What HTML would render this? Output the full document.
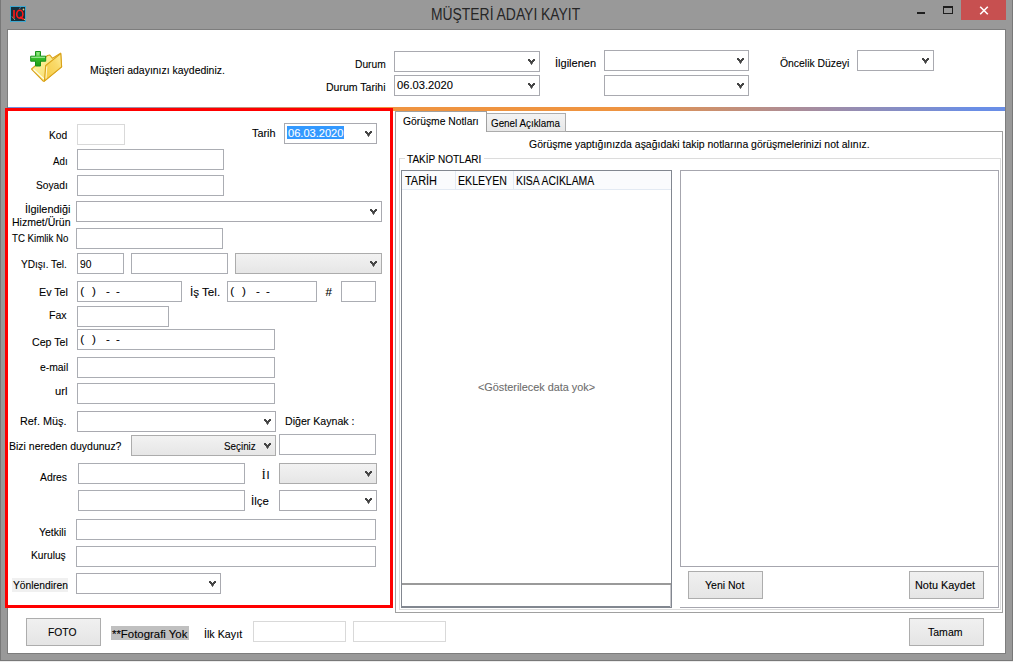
<!DOCTYPE html>
<html><head><meta charset="utf-8"><style>
html,body{margin:0;padding:0;width:1013px;height:662px;overflow:hidden;background:#fff;}
body{position:relative;font-family:"Liberation Sans",sans-serif;}
.b{position:absolute;box-sizing:border-box;}
.t{position:absolute;white-space:pre;transform-origin:0 0;-webkit-text-stroke:0.1px currentColor;font-family:"Liberation Sans",sans-serif;}
</style></head><body>
<div class="b" style="left:0px;top:0px;width:1013px;height:662px;background:#999;"></div>
<div class="b" style="left:0px;top:661px;width:1013px;height:1px;background:#ececec;"></div>
<div class="b" style="left:0px;top:660px;width:1013px;height:1px;background:#787878;"></div>
<div class="b" style="left:0px;top:0px;width:1px;height:661px;background:#787878;"></div>
<div class="b" style="left:1012px;top:0px;width:1px;height:661px;background:#787878;"></div>
<div class="b" style="left:7px;top:29px;width:999px;height:625px;background:#7d7d7d;"></div>
<div class="b" style="left:8px;top:30px;width:997px;height:623px;background:#fff;"></div>
<svg width="16" height="16" viewBox="0 0 16 16" style="position:absolute;left:10px;top:6px">
<rect x="0.5" y="0.5" width="15" height="15" fill="#15303c" stroke="#3fa8d0" stroke-width="1"/>
<path d="M2 10.5 L5 14" stroke="#8fd0a0" stroke-width="0.8"/>
<path d="M9 2.5 L11 1.5" stroke="#4aa0d0" stroke-width="0.7"/>
<circle cx="13.5" cy="3.5" r="0.9" fill="#e8c070"/>
<circle cx="14.5" cy="13.5" r="0.8" fill="#e0b060"/>
<rect x="3.2" y="4" width="1.6" height="8.5" fill="#ff1818"/>
<ellipse cx="9.8" cy="8.2" rx="3.1" ry="3.9" fill="none" stroke="#ff1818" stroke-width="1.6"/>
<path d="M10 11 L13.6 13.2" stroke="#ff1818" stroke-width="1.7"/>
</svg>
<div class="t" style="left:430.63px;top:7px;font-size:16px;line-height:16px;color:#262626;transform:scaleX(0.8681);font-weight:normal;-webkit-text-stroke:0;">MÜŞTERİ ADAYI KAYIT</div>
<div class="b" style="left:917px;top:12px;width:8px;height:2px;background:#1e1e1e;"></div>
<div class="b" style="left:943px;top:6px;width:10px;height:8px;border:1px solid #1e1e1e;border-top-width:2px;"></div>
<div class="b" style="left:961px;top:0px;width:45px;height:20px;background:#c75050;"></div>
<svg width="10" height="9" viewBox="0 0 10 9" style="position:absolute;left:979px;top:6px"><path d="M1.2 0.8 L8.8 8.2 M8.8 0.8 L1.2 8.2" stroke="#fff" stroke-width="1.6"/></svg>
<svg width="38" height="38" viewBox="0 0 38 38" style="position:absolute;left:27px;top:47px">
<defs>
<linearGradient id="fb" x1="0" y1="0" x2="1" y2="1"><stop offset="0" stop-color="#fffbb0"/><stop offset="1" stop-color="#f7d35a"/></linearGradient>
<linearGradient id="ff" x1="1" y1="0" x2="0" y2="1"><stop offset="0" stop-color="#fdf0a0"/><stop offset="0.35" stop-color="#f9da6a"/><stop offset="1" stop-color="#f5c940"/></linearGradient>
<linearGradient id="gp" x1="0" y1="0" x2="0" y2="1"><stop offset="0" stop-color="#7fe070"/><stop offset="0.45" stop-color="#36c02a"/><stop offset="1" stop-color="#1e9a14"/></linearGradient>
</defs>
<path d="M4.5 22 L20.5 8.5 L22.8 8 L25.5 11.3 L33.6 6.2 L34.6 19.8 L17.2 34.2 L16.2 34.2 Z" fill="url(#fb)" stroke="#d9a21a" stroke-width="1.1" stroke-linejoin="round"/>
<path d="M6.5 22.5 L17 32" stroke="#fffde8" stroke-width="1.2"/>
<path d="M18.7 18.5 L33.8 6.6 L34.6 19.8 L17.4 34.2 Z" fill="url(#ff)" stroke="#d9a21a" stroke-width="1.1" stroke-linejoin="round"/>
<path d="M19.8 19.5 L19 31.5" stroke="#fffbe0" stroke-width="0.9"/>
<path d="M8.5 4.5 h5 v4.7 h5.2 v5 h-5.2 v4.8 h-5 v-4.8 h-4.8 v-5 h4.8 Z" fill="url(#gp)" stroke="#18901a" stroke-width="1" stroke-linejoin="round"/>
<path d="M4.2 10.3 h13.8 M11 5.5 v3" stroke="#c8f5c0" stroke-width="1" opacity="0.8"/>
</svg>
<div class="t" style="left:89.90px;top:64px;font-size:11.6px;line-height:11.6px;color:#000;transform:scaleX(0.9023);font-weight:normal;">Müşteri adayınızı kaydediniz.</div>
<div class="t" style="left:355.00px;top:58px;font-size:11.6px;line-height:11.6px;color:#000;transform:scaleX(0.8849);font-weight:normal;">Durum</div>
<div class="t" style="left:326.00px;top:81px;font-size:11.6px;line-height:11.6px;color:#000;transform:scaleX(0.9089);font-weight:normal;">Durum Tarihi</div>
<div class="b" style="left:394px;top:51px;width:146px;height:21px;border:1px solid #a9aab0;background:#fff;"><svg width="7" height="6" viewBox="0 0 7 6" style="position:absolute;right:4px;top:7px" shape-rendering="crispEdges"><g fill="#454545"><rect x="0" y="0" width="2" height="1" opacity="1"/><rect x="5" y="0" width="2" height="1" opacity="1"/><rect x="0" y="1" width="3" height="1" opacity="1"/><rect x="4" y="1" width="3" height="1" opacity="1"/><rect x="1" y="2" width="5" height="1" opacity="1"/><rect x="2" y="3" width="3" height="1" opacity="1"/><rect x="3" y="4" width="1" height="1" opacity="1"/><rect x="2" y="4" width="1" height="1" opacity="0.6"/><rect x="4" y="4" width="1" height="1" opacity="0.6"/><rect x="3" y="5" width="1" height="1" opacity="0.8"/></g></svg></div>
<div class="b" style="left:394px;top:75px;width:146px;height:21px;border:1px solid #a9aab0;background:#fff;"><svg width="7" height="6" viewBox="0 0 7 6" style="position:absolute;right:4px;top:7px" shape-rendering="crispEdges"><g fill="#454545"><rect x="0" y="0" width="2" height="1" opacity="1"/><rect x="5" y="0" width="2" height="1" opacity="1"/><rect x="0" y="1" width="3" height="1" opacity="1"/><rect x="4" y="1" width="3" height="1" opacity="1"/><rect x="1" y="2" width="5" height="1" opacity="1"/><rect x="2" y="3" width="3" height="1" opacity="1"/><rect x="3" y="4" width="1" height="1" opacity="1"/><rect x="2" y="4" width="1" height="1" opacity="0.6"/><rect x="4" y="4" width="1" height="1" opacity="0.6"/><rect x="3" y="5" width="1" height="1" opacity="0.8"/></g></svg></div>
<div class="t" style="left:396.50px;top:80px;font-size:11.5px;line-height:11.5px;color:#000;transform:scaleX(0.9710);font-weight:normal;">06.03.2020</div>
<div class="t" style="left:554.75px;top:57px;font-size:11.6px;line-height:11.6px;color:#000;transform:scaleX(0.9511);font-weight:normal;">İlgilenen</div>
<div class="b" style="left:604px;top:50px;width:145px;height:21px;border:1px solid #a9aab0;background:#fff;"><svg width="7" height="6" viewBox="0 0 7 6" style="position:absolute;right:4px;top:7px" shape-rendering="crispEdges"><g fill="#454545"><rect x="0" y="0" width="2" height="1" opacity="1"/><rect x="5" y="0" width="2" height="1" opacity="1"/><rect x="0" y="1" width="3" height="1" opacity="1"/><rect x="4" y="1" width="3" height="1" opacity="1"/><rect x="1" y="2" width="5" height="1" opacity="1"/><rect x="2" y="3" width="3" height="1" opacity="1"/><rect x="3" y="4" width="1" height="1" opacity="1"/><rect x="2" y="4" width="1" height="1" opacity="0.6"/><rect x="4" y="4" width="1" height="1" opacity="0.6"/><rect x="3" y="5" width="1" height="1" opacity="0.8"/></g></svg></div>
<div class="b" style="left:604px;top:75px;width:145px;height:21px;border:1px solid #a9aab0;background:#fff;"><svg width="7" height="6" viewBox="0 0 7 6" style="position:absolute;right:4px;top:7px" shape-rendering="crispEdges"><g fill="#454545"><rect x="0" y="0" width="2" height="1" opacity="1"/><rect x="5" y="0" width="2" height="1" opacity="1"/><rect x="0" y="1" width="3" height="1" opacity="1"/><rect x="4" y="1" width="3" height="1" opacity="1"/><rect x="1" y="2" width="5" height="1" opacity="1"/><rect x="2" y="3" width="3" height="1" opacity="1"/><rect x="3" y="4" width="1" height="1" opacity="1"/><rect x="2" y="4" width="1" height="1" opacity="0.6"/><rect x="4" y="4" width="1" height="1" opacity="0.6"/><rect x="3" y="5" width="1" height="1" opacity="0.8"/></g></svg></div>
<div class="t" style="left:779.60px;top:57px;font-size:11.6px;line-height:11.6px;color:#000;transform:scaleX(0.8965);font-weight:normal;">Öncelik Düzeyi</div>
<div class="b" style="left:857px;top:50px;width:77px;height:21px;border:1px solid #a9aab0;background:#fff;"><svg width="7" height="6" viewBox="0 0 7 6" style="position:absolute;right:4px;top:7px" shape-rendering="crispEdges"><g fill="#454545"><rect x="0" y="0" width="2" height="1" opacity="1"/><rect x="5" y="0" width="2" height="1" opacity="1"/><rect x="0" y="1" width="3" height="1" opacity="1"/><rect x="4" y="1" width="3" height="1" opacity="1"/><rect x="1" y="2" width="5" height="1" opacity="1"/><rect x="2" y="3" width="3" height="1" opacity="1"/><rect x="3" y="4" width="1" height="1" opacity="1"/><rect x="2" y="4" width="1" height="1" opacity="0.6"/><rect x="4" y="4" width="1" height="1" opacity="0.6"/><rect x="3" y="5" width="1" height="1" opacity="0.8"/></g></svg></div>
<div class="b" style="left:8px;top:107px;width:997px;height:4px;background:linear-gradient(to right,#7090e0 0%,#ef9440 38%,#ef9440 61%,#a88c9c 80%,#6a8ee6 97%,#6a8ee6 100%);"></div>
<div class="b" style="left:5px;top:108px;width:388px;height:500px;border:3px solid #ff0000;"></div>
<div class="t" style="left:49.30px;top:129px;font-size:11.6px;line-height:11.6px;color:#000;transform:scaleX(0.8820);font-weight:normal;">Kod</div>
<div class="b" style="left:77px;top:124px;width:48px;height:21px;border:1px solid #d9d9d9;background:#fff;"></div>
<div class="t" style="left:252.00px;top:127px;font-size:11.6px;line-height:11.6px;color:#000;transform:scaleX(0.9360);font-weight:normal;">Tarih</div>
<div class="b" style="left:284px;top:123px;width:93px;height:21px;border:1px solid #a9aab0;background:#fff;"><svg width="7" height="6" viewBox="0 0 7 6" style="position:absolute;right:4px;top:7px" shape-rendering="crispEdges"><g fill="#454545"><rect x="0" y="0" width="2" height="1" opacity="1"/><rect x="5" y="0" width="2" height="1" opacity="1"/><rect x="0" y="1" width="3" height="1" opacity="1"/><rect x="4" y="1" width="3" height="1" opacity="1"/><rect x="1" y="2" width="5" height="1" opacity="1"/><rect x="2" y="3" width="3" height="1" opacity="1"/><rect x="3" y="4" width="1" height="1" opacity="1"/><rect x="2" y="4" width="1" height="1" opacity="0.6"/><rect x="4" y="4" width="1" height="1" opacity="0.6"/><rect x="3" y="5" width="1" height="1" opacity="0.8"/></g></svg></div>
<div class="b" style="left:287px;top:126px;width:57px;height:13px;background:#3399ff;"></div>
<div class="t" style="left:287.50px;top:128px;font-size:11.5px;line-height:11.5px;color:#fff;transform:scaleX(0.9622);font-weight:normal;">06.03.2020</div>
<div class="t" style="left:52.70px;top:155px;font-size:11.6px;line-height:11.6px;color:#000;transform:scaleX(0.8381);font-weight:normal;">Adı</div>
<div class="b" style="left:77px;top:149px;width:147px;height:21px;border:1px solid #abadb3;background:#fff;"></div>
<div class="t" style="left:35.50px;top:179px;font-size:11.6px;line-height:11.6px;color:#000;transform:scaleX(0.8809);font-weight:normal;">Soyadı</div>
<div class="b" style="left:77px;top:175px;width:147px;height:21px;border:1px solid #abadb3;background:#fff;"></div>
<div class="t" style="left:25.36px;top:203px;font-size:11.6px;line-height:11.6px;color:#000;transform:scaleX(0.9388);font-weight:normal;">İlgilendiği</div>
<div class="t" style="left:11.90px;top:216px;font-size:11.6px;line-height:11.6px;color:#000;transform:scaleX(0.9082);font-weight:normal;">Hizmet/Ürün</div>
<div class="b" style="left:76px;top:201px;width:306px;height:21px;border:1px solid #a9aab0;background:#fff;"><svg width="7" height="6" viewBox="0 0 7 6" style="position:absolute;right:4px;top:7px" shape-rendering="crispEdges"><g fill="#454545"><rect x="0" y="0" width="2" height="1" opacity="1"/><rect x="5" y="0" width="2" height="1" opacity="1"/><rect x="0" y="1" width="3" height="1" opacity="1"/><rect x="4" y="1" width="3" height="1" opacity="1"/><rect x="1" y="2" width="5" height="1" opacity="1"/><rect x="2" y="3" width="3" height="1" opacity="1"/><rect x="3" y="4" width="1" height="1" opacity="1"/><rect x="2" y="4" width="1" height="1" opacity="0.6"/><rect x="4" y="4" width="1" height="1" opacity="0.6"/><rect x="3" y="5" width="1" height="1" opacity="0.8"/></g></svg></div>
<div class="t" style="left:12.00px;top:232px;font-size:11.6px;line-height:11.6px;color:#000;transform:scaleX(0.8335);font-weight:normal;">TC Kimlik No</div>
<div class="b" style="left:76px;top:228px;width:147px;height:21px;border:1px solid #abadb3;background:#fff;"></div>
<div class="t" style="left:20.80px;top:258px;font-size:11.6px;line-height:11.6px;color:#000;transform:scaleX(0.8706);font-weight:normal;">YDışı. Tel.</div>
<div class="b" style="left:77px;top:253px;width:47px;height:21px;border:1px solid #abadb3;background:#fff;"></div>
<div class="t" style="left:80.00px;top:258px;font-size:11.6px;line-height:11.6px;color:#000;transform:scaleX(0.8837);font-weight:normal;">90</div>
<div class="b" style="left:131px;top:253px;width:97px;height:21px;border:1px solid #abadb3;background:#fff;"></div>
<div class="b" style="left:235px;top:253px;width:147px;height:21px;border:1px solid #acacac;background:linear-gradient(#f2f2f2,#e6e6e6);"><svg width="7" height="6" viewBox="0 0 7 6" style="position:absolute;right:4px;top:7px" shape-rendering="crispEdges"><g fill="#454545"><rect x="0" y="0" width="2" height="1" opacity="1"/><rect x="5" y="0" width="2" height="1" opacity="1"/><rect x="0" y="1" width="3" height="1" opacity="1"/><rect x="4" y="1" width="3" height="1" opacity="1"/><rect x="1" y="2" width="5" height="1" opacity="1"/><rect x="2" y="3" width="3" height="1" opacity="1"/><rect x="3" y="4" width="1" height="1" opacity="1"/><rect x="2" y="4" width="1" height="1" opacity="0.6"/><rect x="4" y="4" width="1" height="1" opacity="0.6"/><rect x="3" y="5" width="1" height="1" opacity="0.8"/></g></svg></div>
<div class="t" style="left:38.60px;top:286px;font-size:11.6px;line-height:11.6px;color:#000;transform:scaleX(0.9227);font-weight:normal;">Ev Tel</div>
<div class="b" style="left:77px;top:281px;width:105px;height:21px;border:1px solid #abadb3;background:#fff;"></div>
<div class="t" style="left:80.20px;top:285px;font-size:11.6px;line-height:11.6px;color:#000;transform:scaleX(1.0000);font-weight:normal;">(</div>
<div class="t" style="left:92.00px;top:285px;font-size:11.6px;line-height:11.6px;color:#000;transform:scaleX(1.0000);font-weight:normal;">)</div>
<div class="t" style="left:106.10px;top:285px;font-size:11.6px;line-height:11.6px;color:#000;transform:scaleX(1.0000);font-weight:normal;">-</div>
<div class="t" style="left:116.00px;top:285px;font-size:11.6px;line-height:11.6px;color:#000;transform:scaleX(1.0000);font-weight:normal;">-</div>
<div class="t" style="left:189.60px;top:286px;font-size:11.6px;line-height:11.6px;color:#000;transform:scaleX(1.0014);font-weight:normal;">İş Tel.</div>
<div class="b" style="left:227px;top:281px;width:90px;height:21px;border:1px solid #abadb3;background:#fff;"></div>
<div class="t" style="left:230.20px;top:285px;font-size:11.6px;line-height:11.6px;color:#000;transform:scaleX(1.0000);font-weight:normal;">(</div>
<div class="t" style="left:242.00px;top:285px;font-size:11.6px;line-height:11.6px;color:#000;transform:scaleX(1.0000);font-weight:normal;">)</div>
<div class="t" style="left:256.10px;top:285px;font-size:11.6px;line-height:11.6px;color:#000;transform:scaleX(1.0000);font-weight:normal;">-</div>
<div class="t" style="left:266.00px;top:285px;font-size:11.6px;line-height:11.6px;color:#000;transform:scaleX(1.0000);font-weight:normal;">-</div>
<div class="t" style="left:325.40px;top:286px;font-size:11.6px;line-height:11.6px;color:#000;transform:scaleX(1.0000);font-weight:normal;">#</div>
<div class="b" style="left:341px;top:281px;width:35px;height:21px;border:1px solid #abadb3;background:#fff;"></div>
<div class="t" style="left:49.40px;top:309px;font-size:11.6px;line-height:11.6px;color:#000;transform:scaleX(0.9114);font-weight:normal;">Fax</div>
<div class="b" style="left:77px;top:306px;width:92px;height:21px;border:1px solid #abadb3;background:#fff;"></div>
<div class="t" style="left:31.70px;top:336px;font-size:11.6px;line-height:11.6px;color:#000;transform:scaleX(0.9165);font-weight:normal;">Cep Tel</div>
<div class="b" style="left:77px;top:329px;width:198px;height:21px;border:1px solid #abadb3;background:#fff;"></div>
<div class="t" style="left:80.20px;top:333px;font-size:11.6px;line-height:11.6px;color:#000;transform:scaleX(1.0000);font-weight:normal;">(</div>
<div class="t" style="left:92.00px;top:333px;font-size:11.6px;line-height:11.6px;color:#000;transform:scaleX(1.0000);font-weight:normal;">)</div>
<div class="t" style="left:106.10px;top:333px;font-size:11.6px;line-height:11.6px;color:#000;transform:scaleX(1.0000);font-weight:normal;">-</div>
<div class="t" style="left:116.00px;top:333px;font-size:11.6px;line-height:11.6px;color:#000;transform:scaleX(1.0000);font-weight:normal;">-</div>
<div class="t" style="left:39.50px;top:361px;font-size:11.6px;line-height:11.6px;color:#000;transform:scaleX(0.8938);font-weight:normal;">e-mail</div>
<div class="b" style="left:77px;top:357px;width:198px;height:21px;border:1px solid #abadb3;background:#fff;"></div>
<div class="t" style="left:55.30px;top:385px;font-size:11.6px;line-height:11.6px;color:#000;transform:scaleX(0.9668);font-weight:normal;">url</div>
<div class="b" style="left:77px;top:383px;width:198px;height:21px;border:1px solid #abadb3;background:#fff;"></div>
<div class="t" style="left:20.40px;top:415px;font-size:11.6px;line-height:11.6px;color:#000;transform:scaleX(0.9355);font-weight:normal;">Ref. Müş.</div>
<div class="b" style="left:77px;top:411px;width:199px;height:21px;border:1px solid #a9aab0;background:#fff;"><svg width="7" height="6" viewBox="0 0 7 6" style="position:absolute;right:4px;top:7px" shape-rendering="crispEdges"><g fill="#454545"><rect x="0" y="0" width="2" height="1" opacity="1"/><rect x="5" y="0" width="2" height="1" opacity="1"/><rect x="0" y="1" width="3" height="1" opacity="1"/><rect x="4" y="1" width="3" height="1" opacity="1"/><rect x="1" y="2" width="5" height="1" opacity="1"/><rect x="2" y="3" width="3" height="1" opacity="1"/><rect x="3" y="4" width="1" height="1" opacity="1"/><rect x="2" y="4" width="1" height="1" opacity="0.6"/><rect x="4" y="4" width="1" height="1" opacity="0.6"/><rect x="3" y="5" width="1" height="1" opacity="0.8"/></g></svg></div>
<div class="t" style="left:284.70px;top:415px;font-size:11.6px;line-height:11.6px;color:#000;transform:scaleX(0.9140);font-weight:normal;">Diğer Kaynak :</div>
<div class="t" style="left:8.55px;top:440px;font-size:11.6px;line-height:11.6px;color:#000;transform:scaleX(0.9039);font-weight:normal;">Bizi nereden duydunuz?</div>
<div class="b" style="left:131px;top:435px;width:145px;height:21px;border:1px solid #acacac;background:linear-gradient(#f2f2f2,#e6e6e6);"><svg width="7" height="6" viewBox="0 0 7 6" style="position:absolute;right:4px;top:7px" shape-rendering="crispEdges"><g fill="#454545"><rect x="0" y="0" width="2" height="1" opacity="1"/><rect x="5" y="0" width="2" height="1" opacity="1"/><rect x="0" y="1" width="3" height="1" opacity="1"/><rect x="4" y="1" width="3" height="1" opacity="1"/><rect x="1" y="2" width="5" height="1" opacity="1"/><rect x="2" y="3" width="3" height="1" opacity="1"/><rect x="3" y="4" width="1" height="1" opacity="1"/><rect x="2" y="4" width="1" height="1" opacity="0.6"/><rect x="4" y="4" width="1" height="1" opacity="0.6"/><rect x="3" y="5" width="1" height="1" opacity="0.8"/></g></svg></div>
<div class="t" style="left:223.50px;top:440px;font-size:11.6px;line-height:11.6px;color:#000;transform:scaleX(0.8489);font-weight:normal;">Seçiniz</div>
<div class="b" style="left:279px;top:434px;width:97px;height:21px;border:1px solid #abadb3;background:#fff;"></div>
<div class="t" style="left:40.10px;top:471px;font-size:11.6px;line-height:11.6px;color:#000;transform:scaleX(0.8921);font-weight:normal;">Adres</div>
<div class="b" style="left:78px;top:463px;width:167px;height:21px;border:1px solid #abadb3;background:#fff;"></div>
<div class="b" style="left:78px;top:490px;width:167px;height:21px;border:1px solid #abadb3;background:#fff;"></div>
<div class="t" style="left:261.80px;top:470px;font-size:11.6px;line-height:11.6px;color:#000;transform:scaleX(1.0000);font-weight:normal;font-family:'Liberation Serif';">İ</div>
<div class="t" style="left:266.80px;top:469px;font-size:11.6px;line-height:11.6px;color:#000;transform:scaleX(1.0000);font-weight:normal;">l</div>
<div class="b" style="left:279px;top:463px;width:98px;height:21px;border:1px solid #acacac;background:linear-gradient(#f2f2f2,#e6e6e6);"><svg width="7" height="6" viewBox="0 0 7 6" style="position:absolute;right:4px;top:7px" shape-rendering="crispEdges"><g fill="#454545"><rect x="0" y="0" width="2" height="1" opacity="1"/><rect x="5" y="0" width="2" height="1" opacity="1"/><rect x="0" y="1" width="3" height="1" opacity="1"/><rect x="4" y="1" width="3" height="1" opacity="1"/><rect x="1" y="2" width="5" height="1" opacity="1"/><rect x="2" y="3" width="3" height="1" opacity="1"/><rect x="3" y="4" width="1" height="1" opacity="1"/><rect x="2" y="4" width="1" height="1" opacity="0.6"/><rect x="4" y="4" width="1" height="1" opacity="0.6"/><rect x="3" y="5" width="1" height="1" opacity="0.8"/></g></svg></div>
<div class="t" style="left:250.61px;top:495px;font-size:11.6px;line-height:11.6px;color:#000;transform:scaleX(0.9883);font-weight:normal;">İlçe</div>
<div class="b" style="left:279px;top:490px;width:98px;height:21px;border:1px solid #a9aab0;background:#fff;"><svg width="7" height="6" viewBox="0 0 7 6" style="position:absolute;right:4px;top:7px" shape-rendering="crispEdges"><g fill="#454545"><rect x="0" y="0" width="2" height="1" opacity="1"/><rect x="5" y="0" width="2" height="1" opacity="1"/><rect x="0" y="1" width="3" height="1" opacity="1"/><rect x="4" y="1" width="3" height="1" opacity="1"/><rect x="1" y="2" width="5" height="1" opacity="1"/><rect x="2" y="3" width="3" height="1" opacity="1"/><rect x="3" y="4" width="1" height="1" opacity="1"/><rect x="2" y="4" width="1" height="1" opacity="0.6"/><rect x="4" y="4" width="1" height="1" opacity="0.6"/><rect x="3" y="5" width="1" height="1" opacity="0.8"/></g></svg></div>
<div class="t" style="left:39.00px;top:526px;font-size:11.6px;line-height:11.6px;color:#000;transform:scaleX(0.9049);font-weight:normal;">Yetkili</div>
<div class="b" style="left:76px;top:519px;width:300px;height:21px;border:1px solid #abadb3;background:#fff;"></div>
<div class="t" style="left:30.60px;top:549px;font-size:11.6px;line-height:11.6px;color:#000;transform:scaleX(0.8832);font-weight:normal;">Kuruluş</div>
<div class="b" style="left:76px;top:546px;width:300px;height:21px;border:1px solid #abadb3;background:#fff;"></div>
<div class="b" style="left:12px;top:578px;width:56px;height:14px;background:#f0f0f0;"></div>
<div class="t" style="left:12.50px;top:579px;font-size:11.6px;line-height:11.6px;color:#000;transform:scaleX(0.8872);font-weight:normal;">Yönlendiren</div>
<div class="b" style="left:76px;top:573px;width:145px;height:21px;border:1px solid #a9aab0;background:#fff;"><svg width="7" height="6" viewBox="0 0 7 6" style="position:absolute;right:4px;top:7px" shape-rendering="crispEdges"><g fill="#454545"><rect x="0" y="0" width="2" height="1" opacity="1"/><rect x="5" y="0" width="2" height="1" opacity="1"/><rect x="0" y="1" width="3" height="1" opacity="1"/><rect x="4" y="1" width="3" height="1" opacity="1"/><rect x="1" y="2" width="5" height="1" opacity="1"/><rect x="2" y="3" width="3" height="1" opacity="1"/><rect x="3" y="4" width="1" height="1" opacity="1"/><rect x="2" y="4" width="1" height="1" opacity="0.6"/><rect x="4" y="4" width="1" height="1" opacity="0.6"/><rect x="3" y="5" width="1" height="1" opacity="0.8"/></g></svg></div>
<div class="b" style="left:395px;top:131px;width:608px;height:482px;border:1px solid #a0a0a0;"></div>
<div class="b" style="left:399px;top:158px;width:602px;height:452px;border:1px solid #dcdcdc;"></div>
<div class="b" style="left:395px;top:111px;width:92px;height:21px;border:1px solid #a0a0a0;border-bottom:none;background:#fff;"></div>
<div class="b" style="left:487px;top:113px;width:79px;height:19px;border:1px solid #acacac;border-left:none;background:linear-gradient(#f3f3f3,#e8e8e8);"></div>
<div class="t" style="left:402.80px;top:115px;font-size:11.6px;line-height:11.6px;color:#000;transform:scaleX(0.8901);font-weight:normal;">Görüşme Notları</div>
<div class="t" style="left:490.70px;top:118px;font-size:11.2px;line-height:11.2px;color:#000;transform:scaleX(0.8790);font-weight:normal;">Genel Açıklama</div>
<div class="t" style="left:528.80px;top:138px;font-size:11.6px;line-height:11.6px;color:#000;transform:scaleX(0.9022);font-weight:normal;">Görüşme yaptığınızda aşağıdaki takip notlarına görüşmelerinizi not alınız.</div>
<div class="b" style="left:405px;top:152px;width:79px;height:11px;background:#fff;"></div>
<div class="t" style="left:407.40px;top:153px;font-size:11.6px;line-height:11.6px;color:#000;transform:scaleX(0.8662);font-weight:normal;">TAKİP NOTLARI</div>
<div class="b" style="left:401px;top:170px;width:271px;height:438px;border:1px solid #828790;border-bottom-width:2px;background:#fff;"></div>
<div class="b" style="left:402px;top:171px;width:269px;height:19px;background:#fafbfd;border-bottom:1px solid #e3eaf3;"></div>
<div class="b" style="left:455px;top:171px;width:1px;height:18px;background:#e3eaf3;"></div>
<div class="b" style="left:513px;top:171px;width:1px;height:18px;background:#e3eaf3;"></div>
<div class="t" style="left:405.30px;top:175px;font-size:12.5px;line-height:12.5px;color:#000;transform:scaleX(0.8756);font-weight:normal;">TARİH</div>
<div class="t" style="left:458.35px;top:175px;font-size:12.5px;line-height:12.5px;color:#000;transform:scaleX(0.8475);font-weight:normal;">EKLEYEN</div>
<div class="t" style="left:516.47px;top:175px;font-size:12.5px;line-height:12.5px;color:#000;transform:scaleX(0.8341);font-weight:normal;">KISA ACIKLAMA</div>
<div class="t" style="left:477.90px;top:381px;font-size:11.6px;line-height:11.6px;color:#6d6d6d;transform:scaleX(0.9365);font-weight:normal;">&lt;Gösterilecek data yok&gt;</div>
<div class="b" style="left:402px;top:583px;width:269px;height:2px;background:#9a9a9a;"></div>
<div class="b" style="left:680px;top:607px;width:319px;height:1px;background:#a6a6ae;"></div>
<div class="b" style="left:998px;top:170px;width:1px;height:438px;background:#a6a6ae;"></div>
<div class="b" style="left:670px;top:585px;width:1px;height:22px;background:#c8c8cc;"></div>
<div class="b" style="left:680px;top:170px;width:319px;height:397px;border:1px solid #a6a6ae;"></div>
<div class="b" style="left:688px;top:571px;width:75px;height:28px;border:1px solid #adadad;background:linear-gradient(#f0f0f0,#e5e5e5);"></div>
<div class="t" style="left:704.80px;top:579px;font-size:11.6px;line-height:11.6px;color:#000;transform:scaleX(0.9076);font-weight:normal;">Yeni Not</div>
<div class="b" style="left:909px;top:571px;width:75px;height:28px;border:1px solid #adadad;background:linear-gradient(#f0f0f0,#e5e5e5);"></div>
<div class="t" style="left:915.10px;top:579px;font-size:11.6px;line-height:11.6px;color:#000;transform:scaleX(0.9399);font-weight:normal;">Notu Kaydet</div>
<div class="b" style="left:26px;top:618px;width:75px;height:28px;border:1px solid #adadad;background:linear-gradient(#f0f0f0,#e5e5e5);"></div>
<div class="t" style="left:48.00px;top:626px;font-size:11.6px;line-height:11.6px;color:#000;transform:scaleX(0.8883);font-weight:normal;">FOTO</div>
<div class="b" style="left:111px;top:626px;width:78px;height:14px;background:#c0c0c0;"></div>
<div class="t" style="left:112.00px;top:628px;font-size:11.6px;line-height:11.6px;color:#000;transform:scaleX(0.9830);font-weight:normal;">**Fotografi Yok</div>
<div class="t" style="left:203.88px;top:628px;font-size:11.6px;line-height:11.6px;color:#000;transform:scaleX(0.9241);font-weight:normal;">İlk Kayıt</div>
<div class="b" style="left:253px;top:621px;width:93px;height:21px;border:1px solid #d9d9d9;background:#fff;"></div>
<div class="b" style="left:353px;top:621px;width:93px;height:21px;border:1px solid #d9d9d9;background:#fff;"></div>
<div class="b" style="left:909px;top:618px;width:75px;height:28px;border:1px solid #adadad;background:linear-gradient(#f0f0f0,#e5e5e5);"></div>
<div class="t" style="left:928.20px;top:626px;font-size:11.6px;line-height:11.6px;color:#000;transform:scaleX(0.9076);font-weight:normal;">Tamam</div>
</body></html>
